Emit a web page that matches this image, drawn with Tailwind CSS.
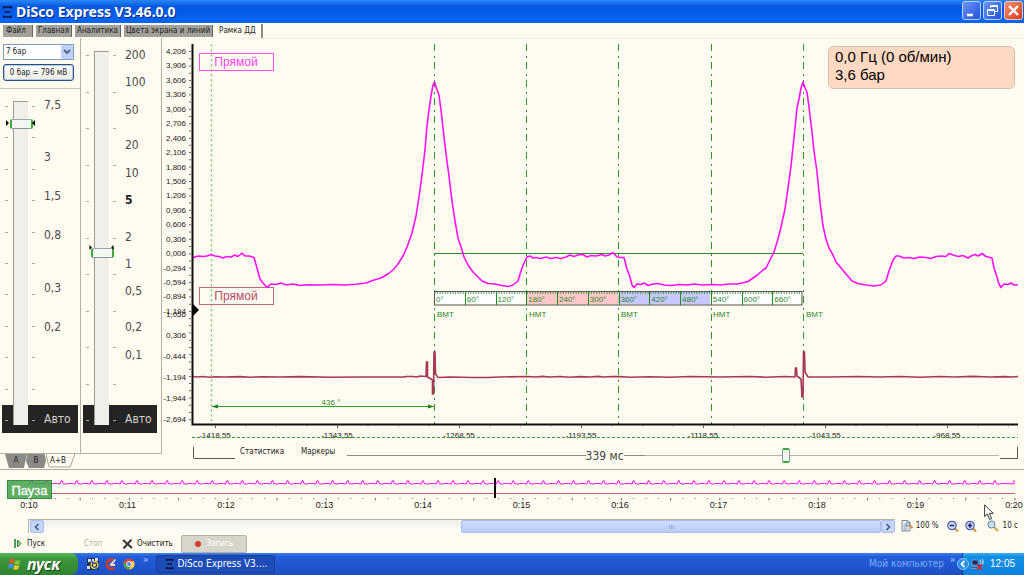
<!DOCTYPE html>
<html lang="ru">
<head>
<meta charset="utf-8">
<title>DiSco Express V3.46.0.0</title>
<script src="https://cdn.jsdelivr.net/npm/@tailwindcss/browser@4"></script>
</head>
<body class="flex min-h-screen flex-col bg-[#fffbf0] font-['DejaVu_Sans_Condensed','DejaVu_Sans',sans-serif] text-[8px] leading-3 text-[#222]">

<!-- Title bar -->
<header class="flex h-[23px] items-center bg-linear-to-b from-[#2a86f8] via-[#0457e0] via-30% to-[#0566fb] pl-[3px] pr-px">
  <svg class="h-3 w-[9px]" viewBox="0 0 9 12" stroke="#0a1840" fill="none" stroke-width="1.6"><path d="M0 1h9M1.500 6h6M0 11h9M1 0v2.500M8 0v2.500M1 9.500v2.500M8 9.500v2.500"/></svg>
  <h1 class="ml-1 flex-1 font-['Noto_Sans',sans-serif] text-[14px] font-bold leading-5 text-white [text-shadow:1px_1px_0_#0a2a80]">DiSco Express V3.46.0.0</h1>
  <div class="mb-0.5 flex gap-0.5">
    <button aria-label="Свернуть" class="h-[19px] w-[19px] rounded-[3px] border border-[#bcd0fa] bg-linear-to-br from-[#6d95f5] to-[#2350d8]"><svg viewBox="0 0 17 17"><path d="M4 13h6" stroke="#fff" stroke-width="2.500"/></svg></button>
    <button aria-label="Восстановить" class="h-[19px] w-[19px] rounded-[3px] border border-[#bcd0fa] bg-linear-to-br from-[#6d95f5] to-[#2350d8]"><svg viewBox="0 0 17 17" fill="none" stroke="#fff"><path d="M6.500 6V3.500h7v6H11M6 4.500h8M3.500 7.500h7v6h-7zM3 8.500h8"/></svg></button>
    <button aria-label="Закрыть" class="h-[19px] w-[19px] rounded-[3px] border border-[#f4c8bc] bg-linear-to-br from-[#f09070] to-[#d03a10]"><svg viewBox="0 0 17 17"><path d="M4 4l9 9M13 4l-9 9" stroke="#fff" stroke-width="2.400"/></svg></button>
  </div>
</header>

<!-- Page tabs -->
<nav class="flex h-[15px] items-center gap-[3px] pl-[3px]">
  <button class="h-3 border-r border-[#66645e] bg-[#a3a19b] pl-[3px] pr-1.5">Файл</button>
  <button class="h-3 border-r border-[#66645e] bg-[#a3a19b] px-0.5">Главная</button>
  <button class="h-3 border-r border-[#66645e] bg-[#a3a19b] px-0.5">Аналитика</button>
  <button class="h-3 border-r border-[#66645e] bg-[#a3a19b] px-0.5">Цвета экрана и линий</button>
  <button class="h-[14px] border-r-2 border-[#8d8b84] pl-[3px] pr-[5px]">Рамка ДД</button>
</nav>

<main class="flex items-start border-b border-[#aeaca2]">
  <!-- Gain panels -->
  <div class="flex w-[162px] shrink-0 flex-col">
    <div class="flex border-b border-[#b3b1a6]">
      <section class="relative flex w-[81px] flex-col border-r border-[#b3b1a6]">
        <div class="flex flex-col gap-1 border-b border-[#cbc9bf] pb-[7px] pl-[3px] pr-1.5 pt-1.5">
          <div class="relative flex">
            <select aria-label="Диапазон" class="h-4 w-full appearance-none border border-[#7f9db9] bg-white pl-0.5 text-[8px]"><option>7 бар</option></select>
            <span class="pointer-events-none absolute right-px top-px flex h-[14px] w-3 items-center justify-center rounded-[2px] bg-[#bed0f8]"><svg class="h-2 w-2" viewBox="0 0 8 8" fill="none" stroke="#4a6184" stroke-width="1.800"><path d="M1 2l3 3 3-3"/></svg></span>
          </div>
          <button class="h-[17px] w-full rounded-[3px] border border-[#27507d] bg-linear-to-b from-white to-[#ecebe4] shadow-[inset_0_0_0_1px_#b4cbee]">0 бар = 796 мВ</button>
        </div>
        <div class="absolute bottom-5 left-0.5 right-0.5 h-7 bg-[#242424]"></div>
        <div class="relative mb-7 mt-3 flex pl-[5px]">
          <div class="mt-[5px] mb-1 flex w-[3px] flex-col justify-between"><i class="h-px bg-[#aaa89f]"></i><i class="h-px bg-[#aaa89f]"></i><i class="h-px bg-[#aaa89f]"></i><i class="h-px bg-[#aaa89f]"></i><i class="h-px bg-[#aaa89f]"></i><i class="h-px bg-[#aaa89f]"></i><i class="h-px bg-[#aaa89f]"></i><i class="h-px bg-[#aaa89f]"></i><i class="h-px bg-[#aaa89f]"></i><i class="h-px bg-[#aaa89f]"></i><i class="h-px bg-[#aaa89f]"></i></div>
          <input type="range" aria-label="Усиление A" min="0" max="314" value="17" class="h-[324px] w-6 appearance-none bg-transparent [writing-mode:vertical-lr] [&::-webkit-slider-runnable-track]:w-[15px] [&::-webkit-slider-runnable-track]:border-l [&::-webkit-slider-runnable-track]:border-t [&::-webkit-slider-runnable-track]:border-[#9d9b92] [&::-webkit-slider-runnable-track]:bg-[#f0efe9] [&::-webkit-slider-thumb]:-ml-1 [&::-webkit-slider-thumb]:h-[10px] [&::-webkit-slider-thumb]:w-[23px] [&::-webkit-slider-thumb]:appearance-none [&::-webkit-slider-thumb]:rounded-[2px] [&::-webkit-slider-thumb]:border [&::-webkit-slider-thumb]:border-l-2 [&::-webkit-slider-thumb]:border-r-2 [&::-webkit-slider-thumb]:border-l-[#3aac3a] [&::-webkit-slider-thumb]:border-r-[#3aac3a] [&::-webkit-slider-thumb]:border-t-[#9aa9b2] [&::-webkit-slider-thumb]:border-b-[#8a989f] [&::-webkit-slider-thumb]:bg-[#f5f5f1]">
          <div class="mt-[5px] mb-1 flex w-[3px] flex-col justify-between"><i class="h-px bg-[#aaa89f]"></i><i class="h-px bg-[#aaa89f]"></i><i class="h-px bg-[#aaa89f]"></i><i class="h-px bg-[#aaa89f]"></i><i class="h-px bg-[#aaa89f]"></i><i class="h-px bg-[#aaa89f]"></i><i class="h-px bg-[#aaa89f]"></i><i class="h-px bg-[#aaa89f]"></i><i class="h-px bg-[#aaa89f]"></i><i class="h-px bg-[#aaa89f]"></i><i class="h-px bg-[#aaa89f]"></i></div>
          <svg class="absolute left-1.5 top-[19px] h-[6px] w-[29px]" viewBox="0 0 29 6"><path d="M0 0l3 3-3 3zM29 0l-3 3 3 3z"/></svg>
          <ul class="-mb-0.5 -mt-1 ml-[9px] text-[12px] leading-4 text-[#4c4c4c]">
            <li class="h-[52px]">7,5</li><li class="h-[39px]">3</li><li class="h-[39px]">1,5</li><li class="h-[53px]">0,8</li><li class="h-[39px]">0,3</li><li class="h-[92px]">0,2</li><li class="h-4 text-[#d4d3cb]">Авто</li>
          </ul>
        </div>
      </section>
      <section class="relative flex w-[81px] flex-col border-r border-[#b3b1a6]">
        <div class="absolute bottom-5 left-0.5 right-1 h-7 bg-[#242424]"></div>
        <div class="relative mb-7 mt-[13px] flex pl-[5px]">
          <div class="mt-1 mb-1 flex w-[3px] flex-col justify-between"><i class="h-px bg-[#aaa89f]"></i><i class="h-px bg-[#aaa89f]"></i><i class="h-px bg-[#aaa89f]"></i><i class="h-px bg-[#aaa89f]"></i><i class="h-px bg-[#aaa89f]"></i><i class="h-px bg-[#aaa89f]"></i><i class="h-px bg-[#aaa89f]"></i><i class="h-px bg-[#aaa89f]"></i><i class="h-px bg-[#aaa89f]"></i><i class="h-px bg-[#aaa89f]"></i><i class="h-px bg-[#aaa89f]"></i></div>
          <input type="range" aria-label="Усиление B" min="0" max="364" value="197" class="h-[374px] w-6 appearance-none bg-transparent [writing-mode:vertical-lr] [&::-webkit-slider-runnable-track]:w-[15px] [&::-webkit-slider-runnable-track]:border-l [&::-webkit-slider-runnable-track]:border-t [&::-webkit-slider-runnable-track]:border-[#9d9b92] [&::-webkit-slider-runnable-track]:bg-[#f0efe9] [&::-webkit-slider-thumb]:-ml-1 [&::-webkit-slider-thumb]:h-[10px] [&::-webkit-slider-thumb]:w-[23px] [&::-webkit-slider-thumb]:appearance-none [&::-webkit-slider-thumb]:rounded-[2px] [&::-webkit-slider-thumb]:border [&::-webkit-slider-thumb]:border-l-2 [&::-webkit-slider-thumb]:border-r-2 [&::-webkit-slider-thumb]:border-l-[#3aac3a] [&::-webkit-slider-thumb]:border-r-[#3aac3a] [&::-webkit-slider-thumb]:border-t-[#9aa9b2] [&::-webkit-slider-thumb]:border-b-[#8a989f] [&::-webkit-slider-thumb]:bg-[#f5f5f1]">
          <div class="mt-1 mb-1 flex w-[3px] flex-col justify-between"><i class="h-px bg-[#aaa89f]"></i><i class="h-px bg-[#aaa89f]"></i><i class="h-px bg-[#aaa89f]"></i><i class="h-px bg-[#aaa89f]"></i><i class="h-px bg-[#aaa89f]"></i><i class="h-px bg-[#aaa89f]"></i><i class="h-px bg-[#aaa89f]"></i><i class="h-px bg-[#aaa89f]"></i><i class="h-px bg-[#aaa89f]"></i><i class="h-px bg-[#aaa89f]"></i><i class="h-px bg-[#aaa89f]"></i></div>
          <svg class="absolute left-1.5 top-[194px] h-[5px] w-[29px]" viewBox="0 0 29 6"><path d="M0 0l3 3-3 3zM29 0l-3 3 3 3z"/></svg>
          <ul class="-mb-0.5 -mt-1 ml-[9px] text-[12px] leading-4 text-[#4c4c4c]">
            <li class="h-[27px]">200</li><li class="h-7">100</li><li class="h-[35px]">50</li><li class="h-7">20</li><li class="h-[27px]">10</li><li class="h-[37px] font-bold text-[#222]">5</li><li class="h-[27px]">2</li><li class="h-[27px]">1</li><li class="h-9">0,5</li><li class="h-7">0,2</li><li class="h-16">0,1</li><li class="h-4 text-[#d4d3cb]">Авто</li>
          </ul>
        </div>
      </section>
    </div>
    <div class="flex h-[15px] items-start pl-[5px]">
      <button class="h-[14px] w-[22px] bg-[#8b8a86] [clip-path:polygon(0_0,100%_0,86%_100%,18%_100%)]">A</button>
      <button class="-ml-px h-[14px] w-5 bg-[#8b8a86] [clip-path:polygon(6%_0,94%_0,100%_50%,90%_100%,14%_100%,0_50%)]">B</button>
      <button class="relative h-[14px] w-[30px] pr-1.5"><svg class="absolute inset-0 h-full w-full" viewBox="0 0 30 14" fill="none" stroke="#a5a39a"><path d="M0 0l3 13h21L29 0"/></svg>A+B</button>
    </div>
  </div>

  <!-- Oscillogram -->
  <div class="relative min-w-0 flex-1">
    <svg class="block w-full" viewBox="162 38 862 404" fill="none" font-family="'Liberation Sans',sans-serif" font-size="8">
      <path d="M230 38.500H1024" stroke="#efece0"/>
      <g id="yLabels" fill="#222" text-anchor="end"></g>
      <g id="xLabels" fill="#222" text-anchor="middle"></g>
      <path d="M190 51V424" stroke="#666" stroke-width="2" stroke-dasharray="1 6.220"/>
      <path d="M211.500 44V424" stroke="#8fd08f" stroke-width="1.500" stroke-dasharray="2.500 2.500"/>
      <path d="M434.500 44V424M526.500 44V424M618.500 44V424M711.500 44V424M803.500 44V424" stroke="#2c982c" stroke-dasharray="7 5 2 4"/>
      <path d="M434 253.500H803" stroke="#2c8a2c"/>
      <rect x="434.500" y="291.500" width="92" height="13" fill="#fff"/>
      <rect x="526.500" y="291.500" width="92" height="13" fill="#ffc8c8"/>
      <rect x="618.500" y="291.500" width="92" height="13" fill="#c8c8ff"/>
      <rect x="710.500" y="291.500" width="92" height="13" fill="#fff"/>
      <path d="M434.500 293H802" stroke="#2c8a2c" stroke-opacity=".8" stroke-width="2" stroke-dasharray="1 1.567"/>
      <rect x="434.500" y="291.500" width="367.500" height="13.500" stroke="#555"/>
      <g id="ruler" fill="#1f8a1f" stroke="none"></g>
      <g fill="#1f8a1f"><text x="437" y="317">ВМТ</text><text x="529" y="317">НМТ</text><text x="621" y="317">ВМТ</text><text x="713" y="317">НМТ</text><text x="806" y="317">ВМТ</text><text x="331" y="405" text-anchor="middle">436 °</text></g>
      <path d="M212 406.500H434" stroke="#2ca02c"/>
      <path d="M212 406.500l6-2v4zM434 406.500l-6-2v4z" fill="#128012"/>
      <rect x="199.500" y="53.500" width="74" height="17" stroke="#ff50f4"/>
      <text x="236" y="66" font-size="12" fill="#ff40f4" text-anchor="middle">Прямой</text>
      <rect x="199.500" y="287.500" width="74" height="17" stroke="#c46a80"/>
      <text x="236" y="300" font-size="12" fill="#b84a68" text-anchor="middle">Прямой</text>
      <polyline stroke="#a83858" stroke-width="1.600" points="193,376.500 197,377 203,376.500 209,377.300 216,376.700 225,377 240,376.600 250,377.200 262,376.700 280,377 300,376.600 330,377.200 360,377 380,377 404,377 406,376.500 413,376.500 417,377 420,376 426,376.500 426.500,362 427.500,362 427.500,377 431,379 432.500,380 432.500,394 433.500,394 434,352 435,352 435.500,374 438,377.500 450,377 473,377.500 487,377.500 500,377 528,376.500 536,377 542,376.400 550,377 560,376.500 570,377.200 580,376.600 590,377 598,376.400 604,377 612,376.500 620,376.600 630,377.200 650,376.700 670,377.200 690,376.500 720,377 750,376.500 765,377.200 785,376.500 795,377 795.500,368 796.500,368 797,376 801,379 802,397 803,397 803.500,352 804.500,352 805,372 808,377 830,377 858,376.500 880,377 900,376.500 920,377.200 940,376.500 955,377 972,376.400 990,377 1005,376.600 1012,377 1018,376.500"/>
      <polyline stroke="#ff10f4" stroke-width="1.600" stroke-linejoin="round" points="193,258 196,256.500 199,256 203,256.500 207,256 211,254.500 215,256 219,256.500 223,258 227,256.500 231,257 235,255 238,256.500 242,253 245,256 249,256 254,257.500 257,268 260,279 263,283 267,287.500 271,284 276,284.500 281,283 286,285 293,284 300,285.500 308,284.800 320,285 332,284.500 345,285 356,284.200 366,283 374,280 381,278 388,274 393,270 398,264 403,256 407,247 412,233 416,216 419,197 422,175 425,150 427,126 429,110 431,96 433,85 434.500,82 436,87 439,95 441,110 444,137 446,154 449,176 452,201 455,221 458,238 462,250 464,257 468,265 473,272 477,276 482,281 488,283.500 495,284 502,285.500 508,286.500 513,285 518,281 521,271 524,263 527,257 530,256 533,258 536,257.500 541,258.500 546,257 551,258.500 556,257.500 561,258.500 566,257 570,255 574,256.500 578,255 583,254.500 587,257 591,255.500 596,256 602,254.500 605,256 609,255 613,252.500 616,256 619,257.500 624,257.500 627,269 630,277 632,285 634,287.500 637,284 641,284.500 644,283 648,285.500 653,284 658,283.500 664,285 671,285.500 679,284.500 687,285 694,284 702,285 712,284.500 720,285 729,284 737,284 742,283 748,281.500 753,278 758,274.500 763,270 766,268 770,260 774,252 778,239 781,227 785,209 788,188 791,166 793,147 795,128 797,108 799,99 801,88 803,82 805,88 807,92 809,107 812,132 814,151 817,172 820,202 823,226 826,239 829,248 833,255 836,262 841,268 846,274 852,281 858,283.500 866,285 874,286 881,285 886,281 889,271 893,260 896,256 899,256 904,258 909,257.500 914,258.500 920,257 926,257.500 931,258.500 936,256.500 941,256 946,256.500 949,253.500 953,255 958,256.500 963,255.500 968,258 972,255.500 975,254.500 978,256 982,253.500 986,256.500 992,258 994,268 997,277 999,284 1001,287.500 1004,284 1008,284.500 1011,283 1014,285 1018,285"/>
      <path d="M192.500 44V424.500H1018" stroke="#111" stroke-width="2"/>
      <path d="M215 426.500H1018" stroke="#555" stroke-width="3" stroke-dasharray="1 121"/>
      <path d="M215 426H1018" stroke="#777" stroke-dasharray="1 29.500"/>
      <path d="M192 437.500H1018" stroke="#3a9a3a" stroke-dasharray="3 2"/>
      <path d="M192 303l7 7-7 7z" fill="#000"/>
    </svg>
    <div class="flex h-[27px] items-center pl-[31px] pr-1.5">
      <span class="mb-1.5 h-3 w-[42px] rounded-bl-[2px] border-b border-l border-[#555]"></span>
      <button class="mb-2 ml-[5px]">Статистика</button>
      <button class="mb-2 ml-[17px]">Маркеры</button>
      <span class="ml-3 h-px flex-[238] bg-[#8b8a82]"></span>
      <label for="sweep" class="text-[12px] leading-4 text-[#444]">339 мс</label>
      <span class="h-px w-[21px] bg-[#8b8a82]"></span>
      <input id="sweep" type="range" min="0" max="345" value="137" class="h-4 min-w-0 flex-[354] appearance-none bg-transparent [&::-webkit-slider-runnable-track]:h-px [&::-webkit-slider-runnable-track]:bg-[#b5b3ab] [&::-webkit-slider-thumb]:-mt-[7px] [&::-webkit-slider-thumb]:h-[15px] [&::-webkit-slider-thumb]:w-2 [&::-webkit-slider-thumb]:appearance-none [&::-webkit-slider-thumb]:rounded-[2px] [&::-webkit-slider-thumb]:border-x [&::-webkit-slider-thumb]:border-y-2 [&::-webkit-slider-thumb]:border-x-[#8497a5] [&::-webkit-slider-thumb]:border-y-[#3aac3a] [&::-webkit-slider-thumb]:bg-[#f5f5f1]">
      <span class="mb-1.5 ml-px h-3 w-[18px] border-b border-r border-[#555]"></span>
    </div>
    <div class="absolute right-[9px] top-2 w-[187px] rounded-[6px] border border-[#cbbfb2] bg-[#ffd9c2] px-1.5 pb-1 pt-px font-['Liberation_Sans',sans-serif] text-[15px] leading-[18px] text-black">0,0 Гц (0 об/мин)<br>3,6 бар</div>
  </div>
</main>

<!-- Record overview -->
<section>
  <svg class="block w-full" viewBox="0 470 1024 44" fill="none" font-family="'Liberation Sans',sans-serif">
    <path d="M30 493.500H1015" stroke="#c4607a"/>
    <path id="beats" stroke="#ff10f4"/>
    <path d="M30.500 498.500H1016" stroke="#777" stroke-dasharray="1 11.300"/>
    <path d="M30.500 499.500H1016" stroke="#777" stroke-width="2" stroke-dasharray="1 48.200"/>
    <g id="times" fill="#222" font-size="9" text-anchor="middle"></g>
    <rect x="7.500" y="480.500" width="44" height="18" fill="#3fa24a" fill-opacity=".85" stroke="#3a8a42"/>
    <text x="29.500" y="495" font-size="13" fill="#fff" stroke="#fff" stroke-width=".3" text-anchor="middle">Пауза</text>
    <path d="M495 478V498" stroke="#000" stroke-width="2"/>
  </svg>
</section>

<div class="flex h-5 items-center pl-7 pr-1.5 pt-1">
  <div class="flex h-[14px] flex-1 border-l border-t border-[#b5b3a9] bg-linear-to-b from-[#f0efe8] to-[#fdfdfb] pl-px">
    <button aria-label="Назад" class="flex h-[13px] w-[14px] items-center justify-center rounded-[2px] border border-[#aabff0] bg-[#c5d5fc]"><svg class="h-2 w-2" viewBox="0 0 8 8" fill="none" stroke="#4a6184" stroke-width="1.700"><path d="M5.500 1l-3 3 3 3"/></svg></button>
    <div class="flex-[418]"></div>
    <div class="flex flex-[418] items-center justify-center gap-px rounded-[2px] border border-[#aabff0] bg-linear-to-b from-[#cfdcfe] to-[#b9cbf8]"><i class="h-1 w-px bg-[#93aee8]"></i><i class="h-1 w-px bg-[#93aee8]"></i><i class="h-1 w-px bg-[#93aee8]"></i></div>
    <button aria-label="Вперёд" class="flex h-[13px] w-[14px] items-center justify-center rounded-[2px] border border-[#aabff0] bg-[#c5d5fc]"><svg class="h-2 w-2" viewBox="0 0 8 8" fill="none" stroke="#4a6184" stroke-width="1.700"><path d="M2.500 1l3 3-3 3"/></svg></button>
  </div>
  <button class="ml-1.5 flex items-center gap-[3px]"><svg class="h-3 w-3" viewBox="0 0 12 12"><path d="M1 .5h6l2 2V11H1z" fill="#e8eef2" stroke="#5c7284" stroke-width=".8"/><path d="M2.500 5h3M2.500 7h4M2.500 9h4" stroke="#6c8294" stroke-width=".8"/><circle cx="7" cy="4" r="2" fill="#c5e2f4" stroke="#566b7a" stroke-width=".8"/><path d="M8.500 5.500l3 2.500" stroke="#d48a3a" stroke-width="2"/></svg>100 %</button>
  <button aria-label="Уменьшить" class="ml-2"><svg class="h-[13px] w-3" viewBox="0 0 12 13"><path d="M8 8.500l3 3" stroke="#d9982c" stroke-width="2.200"/><circle cx="5" cy="5.500" r="4.200" fill="#d2dcfa" stroke="#5262ae" stroke-width="1.200"/><path d="M2.800 5.500h4.400" stroke="#16206c" stroke-width="1.500"/></svg></button>
  <button aria-label="Увеличить" class="ml-1.5"><svg class="h-[13px] w-3" viewBox="0 0 12 13"><path d="M8 8.500l3 3" stroke="#d9982c" stroke-width="2.200"/><circle cx="5" cy="5.500" r="4.200" fill="#d2dcfa" stroke="#5262ae" stroke-width="1.200"/><path d="M2.800 5.500h4.400M5 3.300v4.400" stroke="#16206c" stroke-width="1.500"/></svg></button>
  <button class="ml-2.5 flex items-center gap-1"><svg class="h-3 w-3" viewBox="0 0 12 12"><path d="M7 7l4 4" stroke="#d9a23c" stroke-width="2"/><circle cx="4.500" cy="4.500" r="3.600" fill="#bfe3f4" stroke="#6c8090"/></svg>10 с</button>
</div>

<div class="flex h-[19px] items-center pl-[14px]">
  <button class="flex w-[70px] items-center gap-[5px]"><svg class="h-[9px] w-2" viewBox="0 0 8 9"><path d="M1 0v9" stroke="#1f7a2c" stroke-width="1.500"/><path d="M3.500 1l3.500 3.500L3.500 8z" fill="#8ad88a" stroke="#1f7a2c"/></svg>Пуск</button>
  <button disabled class="w-[38px] text-left text-[#b5b3a8]">Стоп</button>
  <button class="flex items-center gap-1"><svg class="h-[10px] w-[11px]" viewBox="0 0 11 10" stroke="#333" stroke-width="2"><path d="M1 1l9 8M9.500.5L1.500 9.500"/></svg>Очистить</button>
  <button disabled class="ml-2 flex h-[18px] w-[66px] items-center justify-center gap-1.5 rounded-[2px] border border-[#b5b2a6] bg-[#d8d5cb] text-white"><span class="h-[6px] w-[6px] rounded-full bg-[#d0402c]"></span>Запись</button>
</div>

<!-- Taskbar -->
<footer class="mt-auto flex h-[22px] items-center bg-linear-to-b from-[#3f82f0] via-[#245edb] via-15% to-[#1c4fc4] text-white">
  <button class="flex h-full w-[78px] items-center gap-[5px] rounded-r-[8px] bg-linear-to-b from-[#5cb85c] via-[#3c983c] via-25% to-[#2f842f] pl-2 font-['Noto_Sans',sans-serif] text-[16px] font-bold italic leading-5 [text-shadow:1px_1px_1px_#174017]">
    <svg class="h-3 w-[14px]" viewBox="0 0 14 12"><path d="M2 1.500q2.500-1.500 4.500 0L5.500 5.500q-2-1.200-4.500 0z" fill="#f0582a"/><path d="M7.500 2q2 1.300 5 0l-1 4q-2.500 1.400-5 0z" fill="#82c83c"/><path d="M1 6.300q2.200-1.200 4.300 0l-1 4.200q-2-1.300-4.300 0z" fill="#4a90f0"/><path d="M6.300 7q2.200 1.300 4.900 0l-1 4q-2.600 1.300-4.900 0z" fill="#fbc82c"/></svg>пуск</button>
  <div class="ml-[9px] flex items-center gap-[6px]">
    <svg class="h-3 w-3" viewBox="0 0 12 12"><rect width="12" height="12" fill="#26334c"/><path d="M1 1h3v3H1zM8 0h3v3H8zM0 8h3v3H0zM5 1h2v2H5z" fill="#cfe0f8"/><circle cx="7.500" cy="7" r="4" fill="#ffe436"/><circle cx="7.500" cy="7" r="2.200" fill="none" stroke="#223c9c" stroke-width="1.200"/><path d="M4 3l2 2M9 9v3" stroke="#2c6ae8" stroke-width="1.500"/></svg>
    <svg class="h-3 w-3" viewBox="0 0 12 12" fill="none"><path d="M9.500 9.500A4.500 4.500 0 1 1 9 2.500" stroke="#d43a28" stroke-width="2.800"/><path d="M5 6l5-5 1 1-4 5z" fill="#e8e4dc"/><path d="M5 7h5" stroke="#d8dce8" stroke-width="2"/></svg>
    <svg class="h-3 w-3" viewBox="0 0 12 12"><circle cx="6" cy="6" r="5.500" fill="#e8402c"/><path d="M1.200 3.300A5.500 5.500 0 0 0 6 11.500L8.400 7.400 3.600 7.400z" fill="#3aaa4c"/><path d="M6 11.500A5.500 5.500 0 0 0 11 3.500H6L8.400 7.400z" fill="#fbd03c"/><circle cx="6" cy="6" r="2.500" fill="#4a8af0" stroke="#fff" stroke-width=".8"/></svg>
  </div>
  <span class="mb-2 ml-2 text-[10px] text-[#a8c8fa]">»</span>
  <button class="ml-[7px] flex h-[18px] w-[119px] items-center gap-1 rounded-[2px] border border-[#17409c] bg-[#1b4cb8] pl-2 text-[10px]"><svg class="h-[10px] w-[9px]" viewBox="0 0 9 12" stroke="#071230" fill="none" stroke-width="1.800"><path d="M0 1h9M1.500 6h6M0 11h9M1 0v2.500M8 0v2.500M1 9.500v2.500M8 9.500v2.500"/></svg>DiSco Express V3....</button>
  <span class="ml-auto text-[10px] text-[#78aaf5]">Мой компьютер</span>
  <span class="mb-2 ml-1.5 mr-1 w-2 text-[10px] text-[#a8c8fa]">»</span>
  <div class="flex h-full w-[62px] items-center border-l border-[#0a3c9c] bg-linear-to-b from-[#3cb0f8] via-[#1290e8] via-15% to-[#0f80dc]">
    <button aria-label="Показать значки" class="-ml-1.5 flex h-3 w-3 items-center justify-center rounded-full border border-[#8cc8fa] bg-[#2a8cec]"><svg class="h-2 w-2" viewBox="0 0 8 8" fill="none" stroke="#fff" stroke-width="1.800"><path d="M5.500 1l-3 3 3 3"/></svg></button>
    <svg class="ml-0.5 h-3 w-[13px]" viewBox="0 0 13 12"><path d="M1 2h6v5H1zM0 9h7v1.500H0z" fill="#1c2a5c" stroke="#9cb0d8" stroke-width=".7"/><path d="M9 2q2 2 0 4M11 1q2.500 3 0 6" fill="none" stroke="#c8d4e8" stroke-width="1.100"/><path d="M6 6.500l5 5M11 6.500l-5 5" stroke="#e01c1c" stroke-width="1.700"/></svg>
    <time class="ml-1.5 font-['Liberation_Sans',sans-serif] text-[10px]">12:05</time>
  </div>
</footer>

<!-- Pointer -->
<svg class="pointer-events-none absolute left-[984px] top-[504px] h-[17px] w-[10px]" viewBox="0 0 10 17"><path d="M.6.8v11.800l2.700-2.500 2.300 5.400 2-.9-2.300-5.200h3.900z" fill="#fff" stroke="#222" stroke-width=".9"/></svg>

<script>
const NS = 'http://www.w3.org/2000/svg';
function label(group, x, y, text) {
  const t = document.createElementNS(NS, 'text');
  t.setAttribute('x', x); t.setAttribute('y', y);
  t.textContent = text;
  document.getElementById(group).append(t);
}
const num = (v, d) => v.toFixed(d).replace('.', ',');
for (let i = 0; i < 19; i++) label('yLabels', 186, 54 + i * 14.44, num(4.206 - i * 0.3, 3));
for (let i = 0; i < 6; i++) label('yLabels', 186, 317 + i * 21, num(1.056 - i * 0.75, 3));
for (let i = 0; i < 7; i++) label('xLabels', 215 + i * 122, 438, num(-1418.55 + i * 75, 2));
for (let i = 0; i < 12; i++) {
  const x = 434 + i * 30.75;
  label('ruler', x + 2, 302, i * 60 + '°');
  if (i) {
    const r = document.createElementNS(NS, 'rect');
    for (const [k, v] of [['x', Math.round(x)], ['y', 291], ['width', 1], ['height', 14]]) r.setAttribute(k, v);
    document.getElementById('ruler').append(r);
  }
}
let d = 'M30 483.5';
for (let x = 32; x < 1010; x += 15.05) d += `L${x - 2} 484L${x - 1} 481L${x} 480.5L${x + 1} 483.5L${x + 4} 484.2L${x + 6} 483.5L${x + 10} 483.5`;
document.getElementById('beats').setAttribute('d', d + 'L1014 484V480');
for (let i = 0; i < 11; i++) label('times', 29 + i * 98.5, 508, '0:' + (10 + i));
</script>
</body>
</html>
